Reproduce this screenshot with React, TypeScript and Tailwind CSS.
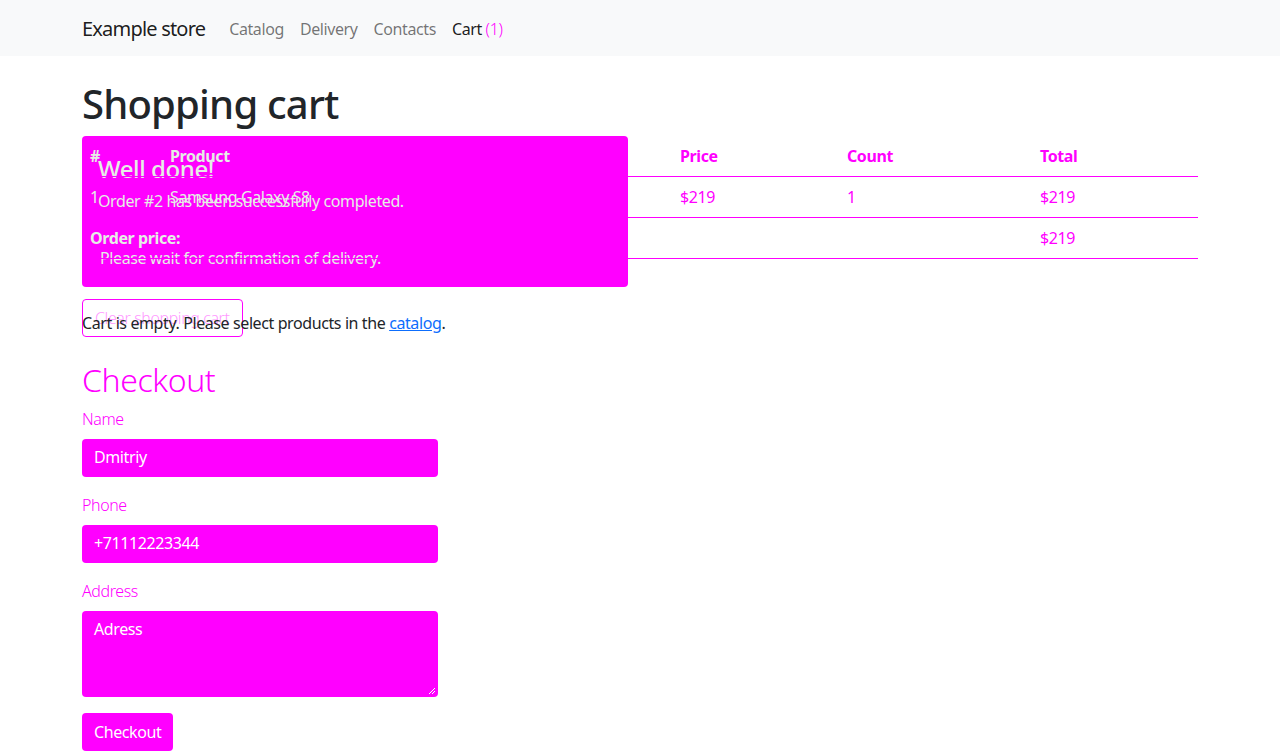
import React from 'react';

const font = { fontFamily: '"Segoe UI", "Noto Sans", "Open Sans", sans-serif' };

function Navbar() {
  return (
    <nav className="bg-[#f8f9fa] h-14">
      <div className="mx-auto w-[1140px] px-3 h-full flex items-center pt-[2px]">
        <a className="text-[20px] tracking-[-0.04em] text-[rgba(0,0,0,0.9)] mr-4">Example store</a>
        <ul className="flex text-[16px]">
          <li className="px-2 text-[rgba(0,0,0,0.55)]">Catalog</li>
          <li className="px-2 text-[rgba(0,0,0,0.55)]">Delivery</li>
          <li className="px-2 text-[rgba(0,0,0,0.55)]">Contacts</li>
          <li className="px-2 text-[rgba(0,0,0,0.9)]">
            Cart <span className="text-[#ff00ff] font-light">(1)</span>
          </li>
        </ul>
      </div>
    </nav>
  );
}

// alert + table share one box, the alert sits under the table text
function CartTable() {
  const light = 'text-[#e6eee6]';
  const mag = 'text-[#ff00ff]';
  return (
    <div className="relative mb-10">
      <div className="absolute left-0 top-0 w-[546px] h-[151px] bg-[#ff00ff] rounded px-4 pt-4 text-[#e6eee6]">
        <h4 className="mt-[3px] text-[24px] leading-[28.8px] font-medium mb-[5px]">Well done!</h4>
        <p className="mb-[33px]">Order #2 has been successfully completed.</p>
        <p className="pl-0.5">Please wait for confirmation of delivery.</p>
      </div>
      <div className="relative grid grid-cols-[80px_510px_167px_193px_1fr]">
        <div className={`px-2 py-2 font-bold border-b border-[#ff00ff] ${light}`}>#</div>
        <div className={`px-2 py-2 font-bold border-b border-[#ff00ff] ${light}`}>Product</div>
        <div className={`px-2 py-2 font-bold border-b border-[#ff00ff] ${mag}`}>Price</div>
        <div className={`px-2 py-2 font-bold border-b border-[#ff00ff] ${mag}`}>Count</div>
        <div className={`px-2 py-2 font-bold border-b border-[#ff00ff] ${mag}`}>Total</div>

        <div className={`px-2 py-2 border-b border-[#ff00ff] ${light}`}>1</div>
        <div className={`px-2 py-2 border-b border-[#ff00ff] ${light}`}>Samsung Galaxy S8</div>
        <div className={`px-2 py-2 border-b border-[#ff00ff] ${mag}`}>$219</div>
        <div className={`px-2 py-2 border-b border-[#ff00ff] ${mag}`}>1</div>
        <div className={`px-2 py-2 border-b border-[#ff00ff] ${mag}`}>$219</div>

        <div className={`col-span-4 px-2 py-2 font-bold border-b border-[#ff00ff] ${light}`}>Order price:</div>
        <div className={`px-2 py-2 border-b border-[#ff00ff] ${mag}`}>$219</div>
      </div>
    </div>
  );
}

function Field({ label, value, area }: { label: string; value: string; area?: boolean }) {
  return (
    <div className="mb-4">
      <label className="block mb-2 text-[#ff00ff] font-light">{label}</label>
      <div
        className={`relative w-[356px] bg-[#ff00ff] rounded px-3 py-1.5 text-white ${area ? 'h-[86px]' : 'h-[38px]'}`}
      >
        {value}
        {area && (
          <svg className="absolute right-0.5 bottom-0.5" width="8" height="8" viewBox="0 0 8 8">
            <path d="M1 7 L7 1 M4 7 L7 4" stroke="#ffffff" strokeWidth="1" />
          </svg>
        )}
      </div>
    </div>
  );
}

export default function App() {
  return (
    <div className="min-h-screen bg-white text-[16px] leading-6 tracking-[-0.025em] text-[#212529]" style={font}>
      <Navbar />
      <main className="mx-auto w-[1140px] px-3 pt-6">
        <h1 className="text-[40px] leading-[48px] font-medium tracking-[-0.02em] mb-2">Shopping cart</h1>
        <CartTable />
        <div className="relative">
          <button className="h-[38px] px-3 border border-[#ff00ff] rounded text-[#ff99ff] font-light">
            Clear shopping cart
          </button>
          <p className="absolute left-0 top-[12px]">
            Cart is empty. Please select products in the{' '}
            <a className="text-[#0d6efd] underline">catalog</a>.
          </p>
        </div>
        <h2 className="mt-[24px] mb-2 text-[32px] leading-[38px] font-light text-[#ff00ff]">Checkout</h2>
        <Field label="Name" value="Dmitriy" />
        <Field label="Phone" value="+71112223344" />
        <Field label="Address" value="Adress" area />
        <button className="h-[38px] px-3 bg-[#ff00ff] rounded text-white">Checkout</button>
      </main>
    </div>
  );
}
